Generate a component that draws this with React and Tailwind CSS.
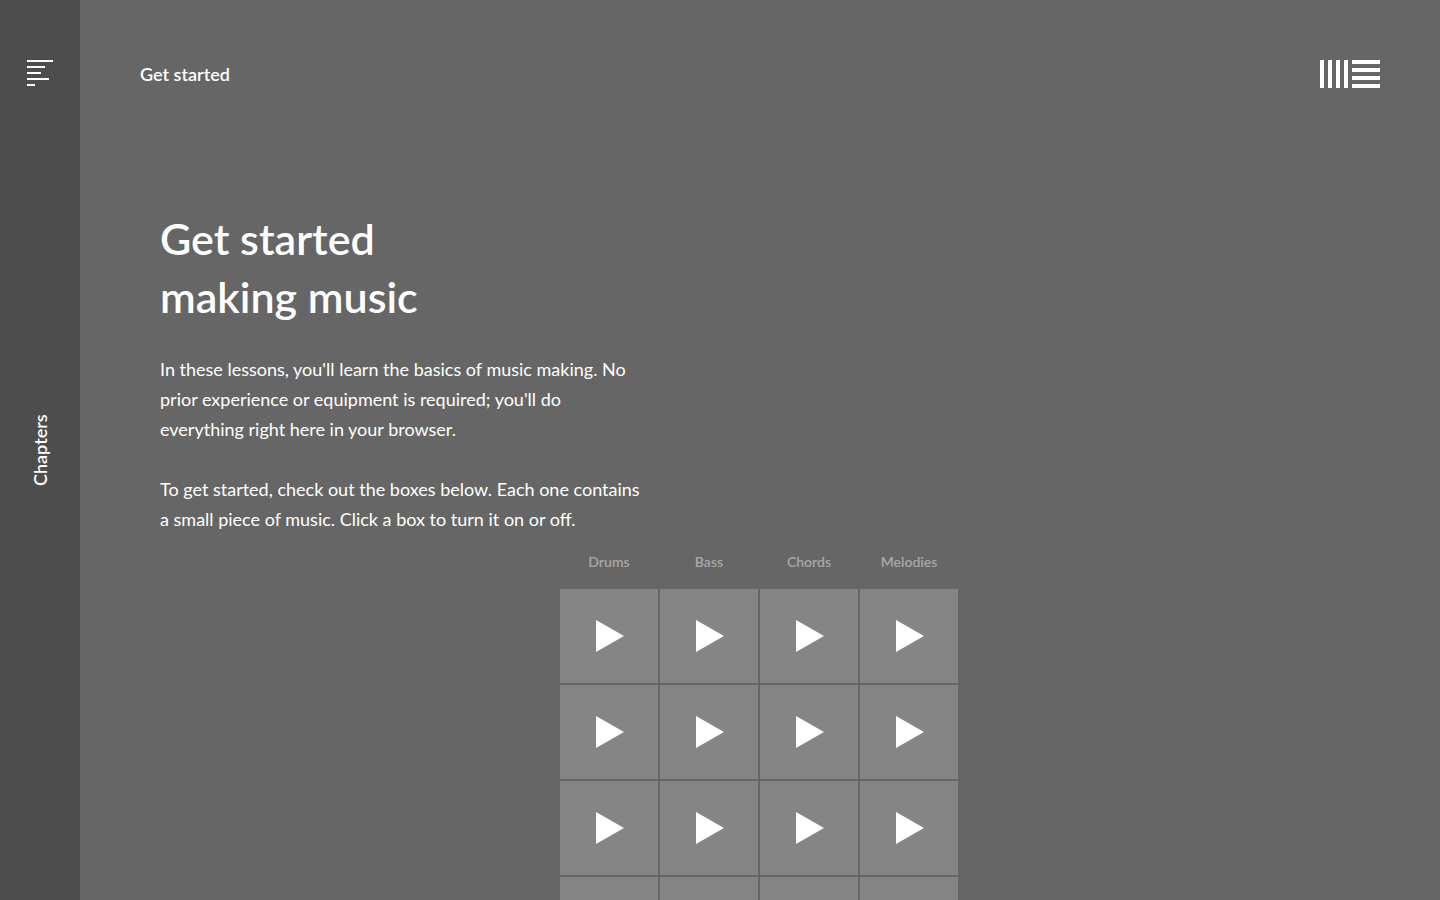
import React, { useState } from 'react';

const TRACKS = ['Drums', 'Bass', 'Chords', 'Melodies'];
const ROWS = 4;

function MenuIcon() {
  return (
    <svg className="w-[26px] h-[26px]" viewBox="0 0 26 26" fill="currentColor" aria-hidden="true">
      <rect y="0" width="26" height="2" />
      <rect y="6" width="18" height="2" />
      <rect y="12" width="14" height="2" />
      <rect y="18" width="22" height="2" />
      <rect y="24" width="8" height="2" />
    </svg>
  );
}

function Logo() {
  return (
    <svg className="w-15 h-7" viewBox="0 0 60 28" fill="currentColor" aria-hidden="true">
      {[0, 8, 16, 24].map((x) => (
        <rect key={x} x={x} width="4" height="28" />
      ))}
      {[0, 8, 16, 24].map((y) => (
        <rect key={y} x="32" y={y} width="28" height="4" />
      ))}
    </svg>
  );
}

function Pad({ label, active, onToggle }) {
  return (
    <button
      type="button"
      aria-label={label}
      aria-pressed={active}
      onClick={onToggle}
      className={`flex items-center justify-center w-[98px] h-[94px] cursor-pointer ${active ? 'bg-[#b3b3b3]' : 'bg-[#858585]'}`}
    >
      <svg className="w-[30px] h-8" viewBox="0 0 30 32" fill="currentColor">
        {active ? <rect x="1" y="2" width="28" height="28" /> : <path d="M2 0L30 16L2 32Z" />}
      </svg>
    </button>
  );
}

export default function App() {
  const [active, setActive] = useState({});

  // one clip at a time per track
  const toggle = (track, row) => {
    setActive({ ...active, [track]: active[track] === row ? null : row });
  };

  return (
    <div className="flex h-screen bg-[#666666] text-white font-['Lato',sans-serif]">
      <nav className="w-20 shrink-0 bg-[#4d4d4d]">
        <button type="button" className="flex flex-col items-center w-full h-full py-15 cursor-pointer">
          <MenuIcon />
          <span className="flex-1 flex items-center justify-center mb-[26px] text-lg leading-6 font-semibold [writing-mode:vertical-rl] rotate-180">
            Chapters
          </span>
        </button>
      </nav>

      <main className="flex-1 overflow-y-auto [scrollbar-width:none]">
        <header className="flex items-center justify-between px-15 pt-15">
          <a href="#get-started" className="text-lg leading-7 font-semibold">Get started</a>
          <a href="#home" aria-label="Home">
            <Logo />
          </a>
        </header>

        <section id="get-started" className="px-20 pt-[122px]">
          <h1 className="text-[43px] leading-[58px] font-semibold">
            Get started
            <br />
            making music
          </h1>

          <div className="mt-7 max-w-[480px] text-lg leading-[30px] space-y-[30px]">
            <p>
              In these lessons, you'll learn the basics of music making. No
              <br />
              prior experience or equipment is required; you'll do
              <br />
              everything right here in your browser.
            </p>
            <p>
              To get started, check out the boxes below. Each one contains
              <br />
              a small piece of music. Click a box to turn it on or off.
            </p>
          </div>

          <div className="w-[400px] mx-auto mt-4 pb-20">
            <div className="grid grid-cols-4 gap-0.5 pr-0.5 mb-[15px] text-sm leading-6 font-semibold text-center text-[#a8a8a8]">
              {TRACKS.map((track) => (
                <span key={track}>{track}</span>
              ))}
            </div>
            <div className="grid grid-cols-4 gap-0.5 pr-0.5">
              {Array.from({ length: ROWS }).map((_, row) =>
                TRACKS.map((track) => (
                  <Pad
                    key={`${track}-${row}`}
                    label={`${track} ${row + 1}`}
                    active={active[track] === row}
                    onToggle={() => toggle(track, row)}
                  />
                ))
              )}
            </div>
          </div>
        </section>
      </main>
    </div>
  );
}
